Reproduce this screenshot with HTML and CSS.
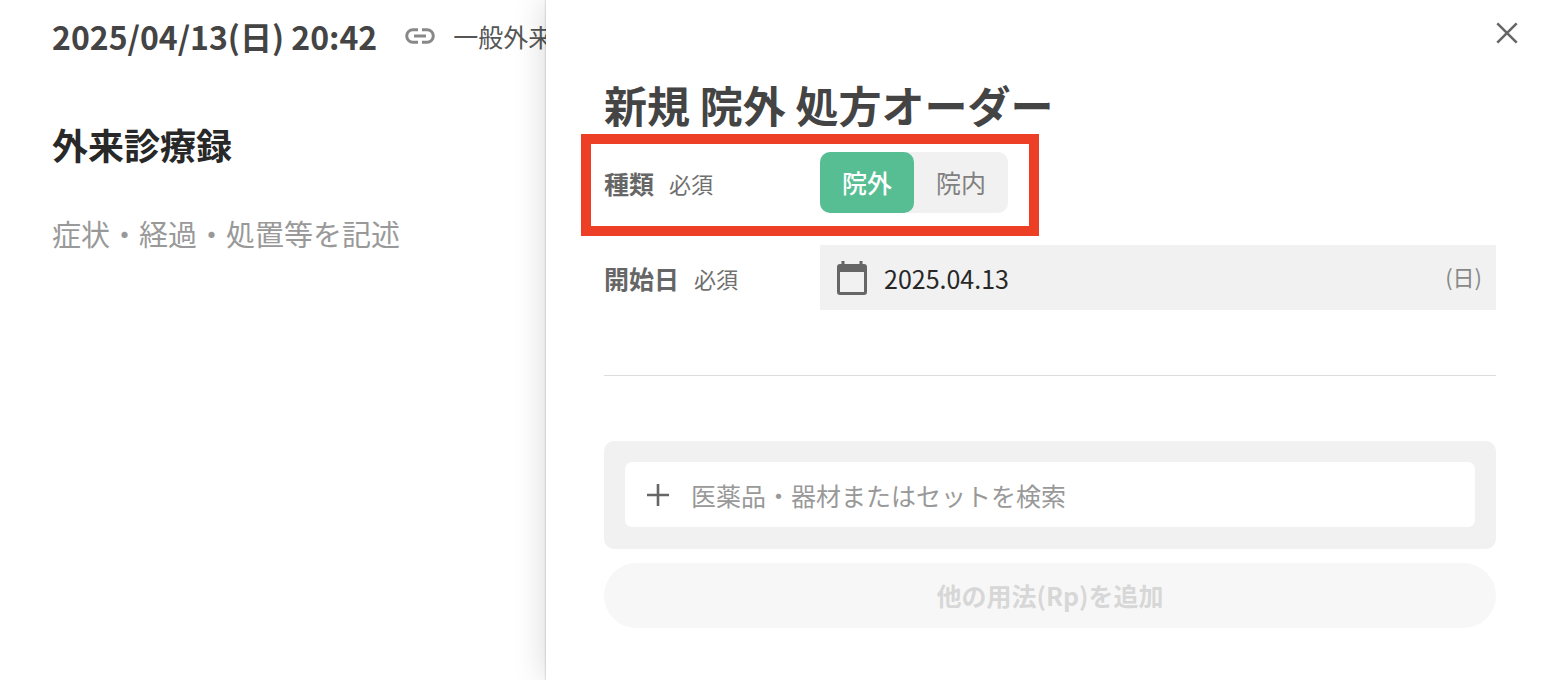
FILE: index.html
```html
<!DOCTYPE html>
<html lang="ja">
<head>
<meta charset="utf-8">
<title>新規 院外 処方オーダー</title>
<link rel="stylesheet" href="styles.css">
</head>
<body>
<div class="app">
  <main class="record">
    <header class="record-head">
      <h1 class="record-date">2025/04/13(日) 20:42</h1>
      <svg class="link-icon" viewBox="0 0 30 16" aria-hidden="true">
        <path d="M13 1.700H8A6.300 6.300 0 0 0 8 14.300H13M17 1.700H22A6.300 6.300 0 0 1 22 14.300H17M9 8H21"/>
      </svg>
      <span class="record-dept">一般外来</span>
    </header>
    <h2 class="record-title"><label for="note">外来診療録</label></h2>
    <textarea class="record-note" id="note" rows="4" placeholder="症状・経過・処置等を記述"></textarea>
  </main>

  <aside class="panel">
    <div class="panel-bar">
      <button class="close" type="button" aria-label="閉じる">
        <svg class="close-icon" viewBox="0 0 22 22" aria-hidden="true"><path d="M1.300 1.300 20.700 20.700M20.700 1.300 1.300 20.700"/></svg>
      </button>
    </div>
    <form class="order">
      <h2 class="order-title">新規 院外 処方オーダー</h2>
      <div class="row row-marked" role="radiogroup" aria-labelledby="kind">
        <div class="row-label"><span class="name" id="kind">種類</span><span class="required">必須</span></div>
        <div class="switch">
          <label class="option"><input class="option-input" type="radio" name="kind" checked><span class="option-text">院外</span></label>
          <label class="option"><input class="option-input" type="radio" name="kind"><span class="option-text">院内</span></label>
        </div>
      </div>
      <div class="row">
        <label class="row-label" for="start"><span class="name">開始日</span><span class="required">必須</span></label>
        <div class="date-field">
          <svg class="date-icon" viewBox="0 0 30 34" aria-hidden="true">
            <path d="M4.500 0h3v3h15V0h3v3H27a3 3 0 0 1 3 3v25a3 3 0 0 1-3 3H3a3 3 0 0 1-3-3V6a3 3 0 0 1 3-3h1.500zM3 11v20h24V11z" fill-rule="evenodd"/>
          </svg>
          <input class="date-input" id="start" type="text" value="2025.04.13">
          <span class="weekday">(日)</span>
        </div>
      </div>
      <hr class="divider">
      <div class="card">
        <label class="search">
          <svg class="plus-icon" viewBox="0 0 22 22" aria-hidden="true"><path d="M11 0V22M0 11H22"/></svg>
          <input class="search-input" type="text" placeholder="医薬品・器材またはセットを検索" aria-label="医薬品・器材またはセットを検索">
        </label>
      </div>
      <button class="add" type="button" disabled>他の用法(Rp)を追加</button>
    </form>
  </aside>
</div>
</body>
</html>
```
FILE: styles.css
```css
*,
*::before,
*::after {
  box-sizing: border-box;
}

body {
  margin: 0;
  background: #fff;
  color: #444;
  font-family: "Noto Sans CJK JP", sans-serif;
  font-size: 25px;
}

button,
input,
textarea {
  margin: 0;
  padding: 0;
  border: 0;
  background: none;
  font: inherit;
}

.app {
  display: grid;
  grid-template-columns: 546fr 1000fr;
  min-height: 100vh;
}

.record {
  min-width: 0;
  padding: 6px 0 0 52px;
  overflow: hidden;
}

.record-head {
  display: flex;
  align-items: center;
  height: 60px;
  white-space: nowrap;
}

.record-date {
  margin: 0;
  font-size: 32px;
  line-height: 60px;
}

.link-icon {
  flex: none;
  width: 30px;
  height: 16px;
  margin: 0 18px 0 28px;
  fill: none;
  stroke: #888;
  stroke-width: 3;
}

.record-dept {
  color: #555;
}

.record-title {
  margin: 48px 0 0;
  color: #282828;
  font-size: 36px;
  line-height: 60px;
}

.record-note {
  display: block;
  width: 100%;
  margin-top: 36px;
  color: #444;
  font-size: 29px;
  line-height: 46px;
  resize: none;
}

.record-note::placeholder,
.search-input::placeholder {
  color: #999;
  opacity: 1;
}

.panel {
  position: relative;
  min-width: 0;
  background: #fff;
  box-shadow: 0 0 2px rgba(0, 0, 0, 0.3), 0 0 32px rgba(0, 0, 0, 0.16);
}

.panel-bar {
  display: flex;
  justify-content: flex-end;
  padding: 11px 17px;
}

.close {
  display: grid;
  place-items: center;
  width: 44px;
  height: 44px;
}

.close-icon,
.plus-icon {
  flex: none;
  width: 22px;
  height: 22px;
  fill: none;
  stroke: #666;
  stroke-width: 2.6;
}

.order {
  padding: 8px 50px 50px 58px;
}

.order-title {
  margin: 0 0 18px;
  font-size: 43px;
  line-height: 60px;
}

.row {
  display: grid;
  grid-template-columns: 216px 1fr;
  align-items: center;
  margin-bottom: 32px;
}

.row-marked {
  position: relative;
}

.row-marked::after {
  content: "";
  position: absolute;
  top: -18px;
  bottom: -23px;
  left: -23px;
  width: 458px;
  border: 10px solid #ec3f26;
  pointer-events: none;
}

.row-label {
  display: flex;
  align-items: center;
  gap: 15px;
}

.name {
  color: #666;
  font-weight: 700;
}

.required {
  color: #707070;
  font-size: 22px;
}

.switch {
  display: flex;
  justify-self: start;
  border-radius: 10px;
  background: #f1f1f1;
}

.option {
  position: relative;
}

.option-input {
  position: absolute;
  opacity: 0;
}

.option-text {
  display: block;
  padding: 0 22px;
  border-radius: 10px;
  color: #808080;
  line-height: 61px;
}

.option-input:checked + .option-text {
  background: #57be94;
  color: #fff;
  font-weight: 500;
}

.date-field {
  display: flex;
  align-items: center;
  height: 65px;
  padding: 0 14px 0 17px;
  background: #f1f1f1;
}

.date-icon {
  flex: none;
  width: 30px;
  height: 34px;
  margin-right: 17px;
  fill: #666;
}

.date-input {
  flex: 1;
  min-width: 0;
  color: #282828;
}

.weekday {
  padding-bottom: 3px;
  color: #888;
  font-size: 22px;
}

.divider {
  height: 1px;
  margin: 65px 0;
  border: 0;
  background: #ddd;
}

.card {
  padding: 21px 21px 22px;
  border-radius: 10px;
  background: #f1f1f1;
}

.search {
  display: flex;
  align-items: center;
  gap: 22px;
  height: 65px;
  padding: 0 22px;
  border-radius: 7px;
  background: #fff;
}

.search-input {
  flex: 1;
  min-width: 0;
  color: #444;
}

.add {
  width: 100%;
  height: 65px;
  margin-top: 14px;
  padding-bottom: 2px;
  border-radius: 33px;
  background: #f7f7f7;
  color: #d7d7d7;
  font-weight: 700;
}
```
